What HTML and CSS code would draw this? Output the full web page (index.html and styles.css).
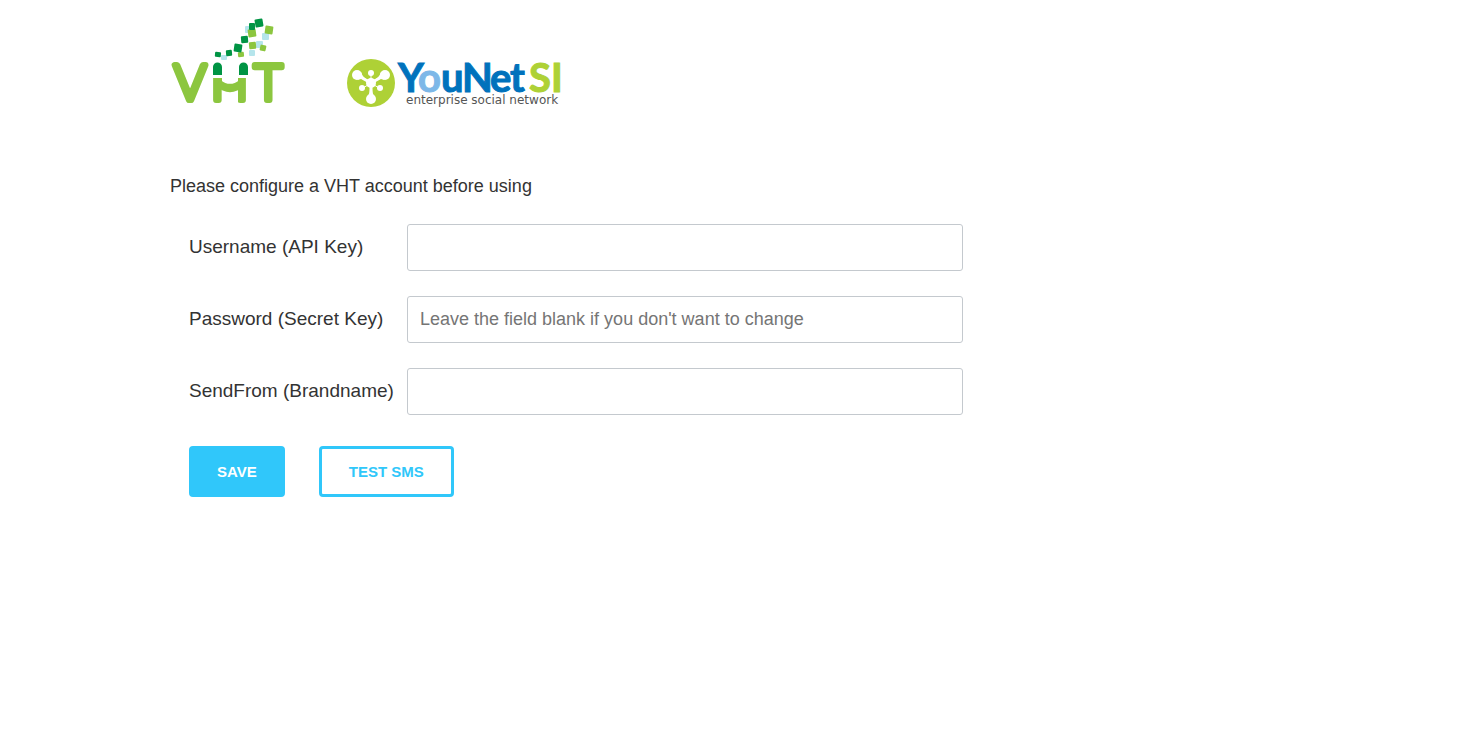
FILE: index.html
```
<!DOCTYPE html>
<html lang="en">
<head>
<meta charset="utf-8">
<title>VHT account configuration</title>
<link rel="stylesheet" href="styles.css">
</head>
<body>
<main class="page">
  <header class="logos">
    <svg class="logo-vht" viewBox="0 0 116 88" role="img" aria-label="VHT">
      <g class="vht-letters">
        <text x="4" y="83">V</text>
        <text x="41" y="83">H</text>
        <text x="84" y="83">T</text>
      </g>
      <path d="M52 44h16v44H52zM40 44h40v17H40z" fill="#fff"/>
      <path d="M48 66Q60 76 72 66" fill="none" stroke="#8cc63f" stroke-width="8"/>
      <path d="M43 58V50a4.500 4.500 0 0 1 9 0v8zM69 58V50a4.500 4.500 0 0 1 9 0v8z" fill="#009444"/>
      <g fill="#b5e5ec">
        <rect x="51" y="38" width="6" height="5" rx="1"/>
        <rect x="79" y="33" width="6" height="6" rx="1"/>
        <rect x="86" y="24" width="7" height="7" rx="1"/>
        <rect x="92" y="16" width="7" height="7" rx="1"/>
        <rect x="75" y="9" width="7" height="7" rx="1"/>
      </g>
      <g fill="#8cc63f">
        <rect x="68" y="35" width="6" height="5" rx="1" transform="rotate(-5 71 38)"/>
        <rect x="79" y="25" width="7" height="7" rx="1" transform="rotate(-5 82 28)"/>
        <rect x="90" y="28" width="6" height="6" rx="1" transform="rotate(12 93 31)"/>
        <rect x="78" y="12" width="8" height="8" rx="1" transform="rotate(-8 82 16)"/>
        <rect x="95" y="9" width="8" height="8" rx="1" transform="rotate(8 99 13)"/>
      </g>
      <g fill="#009444">
        <rect x="45" y="35" width="6" height="5" rx="1" transform="rotate(5 48 37)"/>
        <rect x="56" y="33" width="6" height="6" rx="1" transform="rotate(-5 59 36)"/>
        <rect x="64" y="27" width="8" height="8" rx="1" transform="rotate(8 68 31)"/>
        <rect x="71" y="19" width="7" height="7" rx="1" transform="rotate(-5 74 22)"/>
        <rect x="79" y="6" width="6" height="7" rx="1"/>
        <rect x="85" y="2" width="8" height="8" rx="1" transform="rotate(-10 89 6)"/>
      </g>
    </svg>
    <svg class="logo-younet" viewBox="0 0 218 52" role="img" aria-label="YouNet SI enterprise social network">
      <circle cx="25" cy="26" r="24" fill="#aed136"/>
      <path d="M25 26L11 18M25 26L39 18M25 26V42" stroke="#fff" stroke-width="3"/>
      <path d="M25 26V16M25 26L17 31M25 26L33 31" stroke="#fff" stroke-width="1"/>
      <g fill="#fff">
        <circle cx="25" cy="26" r="5"/>
        <circle cx="11" cy="18" r="5"/>
        <circle cx="39" cy="18" r="5"/>
        <circle cx="25" cy="42" r="5"/>
        <circle cx="25" cy="16" r="3"/>
        <circle cx="16" cy="31" r="3"/>
        <circle cx="34" cy="31" r="3"/>
        <path d="M12 23Q17 20 21 25L22 23Q17 21 15 15ZM38 23Q33 20 29 25L28 23Q33 21 35 15ZM21 40Q24 37 24 31H26Q26 37 29 40Z"/>
      </g>
      <g class="younet-word">
        <text x="52" y="35">Y</text>
        <text class="younet-o" x="72" y="35">o</text>
        <text x="95" y="35">u</text>
        <text x="116" y="35">N</text>
        <text x="144" y="35">e</text>
        <text x="164" y="35">t</text>
      </g>
      <text class="younet-si" x="183" y="35">SI</text>
      <text class="younet-tag" x="60" y="47">enterprise social network</text>
    </svg>
  </header>
  <p class="intro">Please configure a VHT account before using</p>
  <form class="form">
    <div class="row">
      <label for="username">Username (API Key)</label>
      <input id="username" type="text">
    </div>
    <div class="row">
      <label for="password">Password (Secret Key)</label>
      <input id="password" type="password" placeholder="Leave the field blank if you don't want to change">
    </div>
    <div class="row">
      <label for="brand">SendFrom (Brandname)</label>
      <input id="brand" type="text">
    </div>
    <div class="actions">
      <button class="btn btn-primary" type="submit">SAVE</button>
      <button class="btn btn-outline" type="button">TEST SMS</button>
    </div>
  </form>
</main>
</body>
</html>
```
FILE: styles.css
```
* {
  box-sizing: border-box;
}

body {
  margin: 0;
  background: #fff;
  color: #333;
  font-family: "Liberation Sans", Arial, sans-serif;
  font-size: 18px;
}

.page {
  max-width: 963px;
  padding: 17px 0 0 170px;
}

.logos {
  display: flex;
  align-items: flex-end;
  gap: 60px;
}

.logo-vht {
  width: 116px;
  height: 88px;
  overflow: visible;
}

.logo-younet {
  width: 218px;
  height: 52px;
  margin-bottom: -4px;
  overflow: visible;
}

.vht-letters {
  fill: #8cc63f;
  stroke: #8cc63f;
  stroke-width: 6px;
  stroke-linejoin: round;
  font: 300 49px Lato, sans-serif;
}

.younet-word,
.younet-si {
  font: bold 40px Lato, sans-serif;
  stroke-width: 1px;
}

.younet-word {
  fill: #0072bc;
  stroke: #0072bc;
}

.younet-o {
  fill: #7db8e8;
  stroke: #7db8e8;
}

.younet-si {
  fill: #aed136;
  stroke: #aed136;
}

.younet-tag {
  fill: #555;
  font: 12px "DejaVu Sans", sans-serif;
}

.intro {
  margin: 70px 0 27px;
  line-height: 22px;
}

.form {
  display: flex;
  flex-direction: column;
  gap: 25px;
  padding-left: 19px;
}

.row {
  display: flex;
  align-items: center;
}

.row label {
  flex: 0 0 218px;
  padding-bottom: 2px;
  font-size: 19px;
}

.row input {
  flex: 1;
  min-width: 0;
  height: 47px;
  padding: 0 12px;
  border: 1px solid #c4c9ce;
  border-radius: 3px;
  background: #fff;
  color: #333;
  font: inherit;
}

.row input::placeholder {
  color: #757575;
}

.actions {
  display: flex;
  gap: 34px;
  padding-top: 6px;
}

.btn {
  height: 51px;
  padding: 0 25px;
  border: 3px solid #30c7fa;
  border-radius: 4px;
  font: bold 15px "Liberation Sans", Arial, sans-serif;
}

.btn-primary {
  background: #30c7fa;
  color: #fff;
}

.btn-outline {
  padding: 0 27px;
  background: #fff;
  color: #30c7fa;
}
```
